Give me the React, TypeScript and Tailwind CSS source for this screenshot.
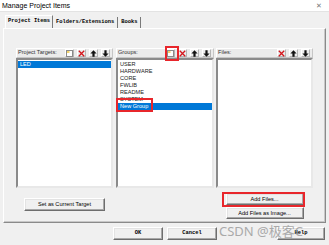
const NewIcon = () => (
  <svg width="7" height="7" viewBox="0 0 7 7">
    <rect x="0.5" y="0.5" width="6" height="6" fill="#fff" stroke="#8a8a8a" />
    <rect x="1" y="1" width="2.5" height="2" fill="#f3d36b" />
  </svg>
);

const DelIcon = () => (
  <svg width="7" height="7" viewBox="0 0 7 7">
    <path d="M0.8 0.8L6.2 6.2M6.2 0.8L0.8 6.2" stroke="#d4161c" strokeWidth="1.3" />
  </svg>
);

const UpIcon = () => (
  <svg width="7" height="7" viewBox="0 0 7 7">
    <path d="M3.5 0.3L6.6 3.6H4.6V6.8H2.4V3.6H0.4Z" fill="#111" />
  </svg>
);

const DownIcon = () => (
  <svg width="7" height="7" viewBox="0 0 7 7">
    <path d="M3.5 6.7L6.6 3.4H4.6V0.2H2.4V3.4H0.4Z" fill="#111" />
  </svg>
);

const IconBtn = ({ children }: { children: React.ReactNode }) => (
  <div className="w-[9px] h-[8px] flex items-center justify-center border border-t-white border-l-white border-r-[#b4b4b4] border-b-[#b4b4b4]">
    {children}
  </div>
);

const Button = ({ label, className = "" }: { label: string; className?: string }) => (
  <div
    className={`flex items-center justify-center bg-[#f0f0f0] border border-t-white border-l-white border-r-[#6e6e6e] border-b-[#6e6e6e] shadow-[inset_-1px_-1px_0_#a8a8a8,inset_1px_1px_0_#e3e3e3] ${className}`}
  >
    {label}
  </div>
);

const Panel = ({
  label,
  icons,
  items,
  selected,
  width,
}: {
  label: string;
  icons: React.ReactNode[];
  items: string[];
  selected: string;
  width: string;
}) => (
  <div className={`flex flex-col ${width}`}>
    <div className="h-[10px] flex items-center justify-between pl-[1px] pr-[2px] bg-[#ebebeb] border border-t-white border-l-white border-r-[#c6c6c6] border-b-[#c6c6c6]">
      <span className="text-[5.6px] text-[#333] leading-none">{label}</span>
      <div className="flex gap-[3px]">
        {icons.map((icon, i) => (
          <IconBtn key={i}>{icon}</IconBtn>
        ))}
      </div>
    </div>
    <div className="h-[130px] bg-white border-2 border-t-[#8a8a8a] border-l-[#8a8a8a] border-r-[#e8e8e8] border-b-[#e8e8e8] pt-[1px]">
      {items.map((item) => (
        <div
          key={item}
          className={`h-[7px] leading-[7px] text-[5.6px] pl-[2px] ${
            item === selected ? "bg-[#0078d7] text-white" : "text-[#222]"
          }`}
        >
          {item}
        </div>
      ))}
    </div>
  </div>
);

export default function App() {
  return (
    <div className="relative w-[329px] h-[245px] bg-[#f0f0f0] flex flex-col overflow-hidden font-['Liberation_Sans',Arial,sans-serif] text-black">
      {/* title bar */}
      <div className="h-[12px] bg-white flex items-center justify-between pl-[2px] pr-[7px] border-b border-[#e3e3e3]">
        <span className="text-[7px] leading-none">Manage Project Items</span>
        <span className="text-[7px] leading-none text-[#777]">✕</span>
      </div>

      <div className="flex-1 flex flex-col px-[3px] pt-[3px]">
        {/* tabs */}
        <div className="h-[13px] flex items-end pl-[2px] font-['Liberation_Mono',monospace] font-bold text-[5.4px] leading-none">
          <div className="h-[13px] px-[2px] flex items-center border-l border-t border-white border-r border-r-[#7a7a7a] bg-[#f0f0f0]">
            Project Items
          </div>
          <div className="h-[11px] px-[3px] flex items-center border-r border-[#7a7a7a]">Folders/Extensions</div>
          <div className="h-[11px] px-[3px] flex items-center border-r border-[#7a7a7a]">Books</div>
        </div>

        {/* tab pane */}
        <div className="h-[195px] border border-t-white border-l-white border-r-[#8a8a8a] border-b-[#8a8a8a] shadow-[inset_-1px_-1px_0_#c8c8c8] pt-[19px] pl-[12px]">
          <div className="flex">
            <div className="flex flex-col w-[97px]">
              <Panel
                label="Project Targets:"
                icons={[<NewIcon />, <DelIcon />, <UpIcon />, <DownIcon />]}
                items={["LED"]}
                selected="LED"
                width="w-[97px]"
              />
              <Button label="Set as Current Target" className="mt-[10px] self-center w-[81px] h-[13px] text-[5.6px]" />
            </div>
            <div className="ml-[3px]">
              <Panel
                label="Groups:"
                icons={[<NewIcon />, <DelIcon />, <UpIcon />, <DownIcon />]}
                items={["USER", "HARDWARE", "CORE", "FWLIB", "README", "SYSTEM", "New Group"]}
                selected="New Group"
                width="w-[98px]"
              />
            </div>
            <div className="ml-[2px] flex flex-col w-[97px]">
              <Panel
                label="Files:"
                icons={[<DelIcon />, <UpIcon />, <DownIcon />]}
                items={[]}
                selected=""
                width="w-[97px]"
              />
              <Button label="Add Files..." className="mt-[5px] self-center w-[78px] h-[12px] text-[5.6px]" />
              <Button label="Add Files as Image..." className="mt-[2px] self-center w-[78px] h-[12px] text-[5.6px]" />
            </div>
          </div>
        </div>

        {/* bottom buttons */}
        <div className="flex mt-[4px] pl-[110px] pr-[1px] font-['Liberation_Mono',monospace] font-bold text-[5.4px]">
          <Button label="OK" className="w-[50px] h-[13px]" />
          <Button label="Cancel" className="ml-[4px] w-[50px] h-[13px]" />
          <Button label="Help" className="ml-auto w-[48px] h-[13px]" />
        </div>
      </div>

      {/* red annotation boxes */}
      <div className="absolute left-[165px] top-[46px] w-[14px] h-[15px] border-2 border-[#e8262b]" />
      <div className="absolute left-[116px] top-[98px] w-[37px] h-[14px] border-2 border-[#e8262b]" />
      <div className="absolute left-[222px] top-[192px] w-[83px] h-[15px] border-2 border-[#e8262b]" />

      {/* watermark */}
      <div className="absolute left-[219px] top-[225px] text-[13px] leading-none text-[#8c8c8c] opacity-70 font-['Noto_Sans','Noto_Sans_CJK_SC',sans-serif]">
        CSDN @极客C
      </div>
    </div>
  );
}
